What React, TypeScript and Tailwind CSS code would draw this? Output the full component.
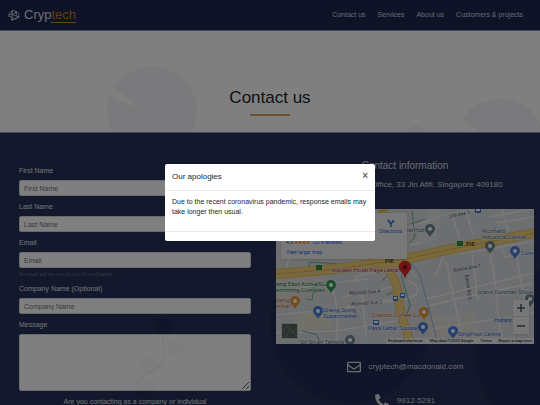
import React, { useState } from 'react';
import { FaRegEnvelope, FaPhoneAlt, FaMapMarkerAlt } from 'react-icons/fa';

const navLinks = ['Contact us', 'Services', 'About us', 'Customers & projects'];

const minorRoads = [
  'M0 84 L40 76 L92 70', 'M10 60 L14 46', 'M0 106 L60 100 L118 92', 'M56 76 L62 104 L60 135',
  'M80 72 Q78 66 86 66 L110 62', 'M66 88 L118 78', 'M70 98 L118 90', 'M0 124 L60 122 L120 112',
  'M86 84 L90 128', 'M134 18 L168 6 L200 0', 'M176 6 L184 30', 'M190 2 L197 26', 'M134 36 L146 34',
  'M160 66 L168 46 L214 40 L258 32', 'M170 52 L178 90 L186 126', 'M214 42 L222 92', 'M196 44 L202 92',
  'M148 98 L206 84 L258 74', 'M150 90 L258 64', 'M156 120 L258 104', 'M220 92 L226 130',
  'M208 30 L258 24', 'M220 14 L258 8', 'M212 8 L258 0', 'M226 0 L232 22', 'M240 44 L250 100',
  'M224 32 L229 48 L258 42', 'M140 68 L132 60', 'M132 72 Q146 76 140 86 L130 90',
];

const places = [
  { x: 154, y: 21, color: '#6f8791', name: ['larHub'], tx: 131, ty: 23 },
  { x: 214, y: 38, color: '#6f8791', name: ['Richfield', 'Industrial Centre'], tx: 206, ty: 24 },
  { x: 239, y: 43, color: '#4a80dd', name: ['Com'], tx: 245, ty: 46 },
  { x: 55, y: 77, color: '#2f9a4c', name: ['lang East ActiveSG', 'wimming Complex'], tx: -1, ty: 77 },
  { x: 19, y: 93, color: '#e79a32', name: ['ylang', 'entral'], tx: -1, ty: 93 },
  { x: 42, y: 103, color: '#4a80dd', name: ['Sheng Siong', 'Supermarket'], tx: 47, ty: 103 },
  { x: 148, y: 104, color: '#e79a32', name: ['Coexist Coffee Co'], tx: 96, ty: 108 },
  { x: 147, y: 119, color: '#4a80dd', name: ['Paya Lebar Square'], tx: 92, ty: 121 },
  { x: 177, y: 123, color: '#4a80dd', name: ['SingPost Centre'], tx: 182, ty: 127 },
  { x: 74, y: 132, color: '#6f8791', name: ['Sri Sivan Temple'], tx: 24, ty: 135 },
  { x: 254, y: 91, color: '#6f8791', name: ['Grand Dunman Showf'], tx: 201, ty: 85 },
];

const labelColors: Record<string, string> = {
  '#6f8791': '#5e7480',
  '#4a80dd': '#3a70cf',
  '#2f9a4c': '#228044',
  '#e79a32': '#cf6c1c',
};

const MapDrawing = () => (
  <svg viewBox="0 0 258 135" className="block w-full" role="img" aria-label="Map of Paya Lebar">
    <rect width="258" height="135" fill="#d9dce0" />
    <path d="M0 70 L50 66 L54 84 L0 92Z M150 108 L200 104 L206 135 L156 135Z" fill="#e2e0d8" />
    <path d="M18 106 L54 100 L58 118 L20 122Z" fill="#e3e0d3" />
    <path d="M152 0 L166 0 L160 30 L138 36Z" fill="#e3e5e8" />
    <g fill="none" stroke="#f1f2f4" strokeWidth="1.6">
      {minorRoads.map((d) => <path key={d} d={d} />)}
    </g>
    <g fill="none" strokeWidth="1">
      <path d="M135 54 L144 66 L157 116 L162 135" stroke="#92b5e8" />
      <path d="M136 2 L139 28 L133 34 M134 15 L150 10 M30 63 L34 53 L110 58 M30 90 L36 91 L38 78 M26 122 L40 125 L44 132 M106 72 L112 66 M110 86 L118 83 M125 66 L134 96 L130 108" stroke="#6bb596" />
    </g>
    <g fill="none" stroke="#e6c05f">
      <path d="M0 65 L60 60 L124 51 L176 40 L258 24" strokeWidth="10" />
      <path d="M100 62 L136 50 L168 43" strokeWidth="6" />
      <path d="M106 0 L112 14" strokeWidth="9" />
      <path d="M112 60 Q122 74 122 86 Q122 100 135 135" strokeWidth="9" />
    </g>
    <g fill="none" stroke="#f3d27a">
      <path d="M0 65 L60 60 L124 51 L176 40 L258 24" strokeWidth="8" />
      <path d="M100 62 L136 50 L168 43" strokeWidth="4" />
      <path d="M112 60 Q122 74 122 86 Q122 100 135 135" strokeWidth="7" />
    </g>
    <path d="M0 65 L60 60 L124 51 L176 40 L258 24" fill="none" stroke="#d9b455" strokeWidth="1" />
    <rect x="40" y="56" width="6" height="5" fill="#2d8c3c" />
    <rect x="181" y="32" width="6" height="5" fill="#2d8c3c" />
    <g fill="#3f78d6">
      <rect x="199" y="-1" width="6" height="5" rx="1" />
      <rect x="117" y="87" width="5" height="5" rx="1" />
      <rect x="124" y="84" width="5" height="5" rx="1" />
      <rect x="97" y="111" width="6" height="5" rx="1" />
    </g>
    <g fill="#ffffff">
      <rect x="200" y="0" width="4" height="2" />
      <rect x="118" y="88" width="3" height="2" />
      <rect x="125" y="85" width="3" height="2" />
      <rect x="98" y="112" width="4" height="2" />
    </g>
    {places.map((p) => (
      <g key={p.name[0]}>
        <path
          d={`M${p.x} ${p.y + 7} C${p.x - 1} ${p.y + 4} ${p.x - 5} ${p.y + 2} ${p.x - 5} ${p.y - 1} A5 5 0 0 1 ${p.x + 5} ${p.y - 1} C${p.x + 5} ${p.y + 2} ${p.x + 1} ${p.y + 4} ${p.x} ${p.y + 7}Z`}
          fill={p.color}
        />
        <circle cx={p.x} cy={p.y - 1} r="2" fill="#ffffff" />
        <text
          fontSize="6"
          fontFamily="Roboto, sans-serif"
          fill={labelColors[p.color]}
          stroke="#eceef0"
          strokeWidth="1"
          paintOrder="stroke"
        >
          {p.name.map((line, i) => <tspan key={line} x={p.tx} y={p.ty + i * 6}>{line}</tspan>)}
        </text>
      </g>
    ))}
    <g fontSize="5" fontFamily="Roboto, sans-serif" fill="#5b6068">
      <text x="174" y="9" transform="rotate(-12 174 9)">Ubi Ave 1</text>
      <text x="178" y="63" transform="rotate(-10 178 63)">Eunos Ave 7</text>
      <text x="73" y="86" transform="rotate(-4 73 86)">Aljunied Ave 4</text>
      <text x="75" y="97" transform="rotate(-4 75 97)">Aljunied Ave 3</text>
      <text x="189" y="66" transform="rotate(82 189 66)">Eunos Rd 5</text>
      <text x="109" y="54" fontSize="6" fontWeight="500" fill="#4d3a22">PIE</text>
      <text x="190" y="37" fontSize="6" fontWeight="500" fill="#4d3a22">PIE</text>
      <text x="218" y="113" fontSize="6" fill="#3a70cf">Hafary</text>
    </g>
    <text x="56" y="63" fontSize="6" fontFamily="Roboto, sans-serif" fill="#c22f37" stroke="#eceef0" strokeWidth="1" paintOrder="stroke">
      Aqueen Hotel Paya Lebar
    </text>
    <path d="M129 69 C128 64 123 62 123 58 A6 6 0 0 1 135 58 C135 62 130 64 129 69Z" fill="#e02a27" stroke="#a81c1c" strokeWidth="0.5" />
    <circle cx="129" cy="58" r="2" fill="#7b0f0f" />
    <rect x="5" y="114" width="17" height="16" rx="1" fill="#c4c8ca" />
    <rect x="6" y="115" width="15" height="14" fill="#56645c" />
    <path d="M6 122 L12 117 L16 124 L21 119 M9 129 L14 121 L21 127" stroke="#78857b" strokeWidth="1" fill="none" />
  </svg>
);

const GoogleMap = () => (
  <div className="relative w-full overflow-hidden font-['Roboto',sans-serif]">
    <MapDrawing />
    <div className="absolute left-[5px] top-1 flex h-[46px] w-[126px] justify-between bg-[#f0f1f3] px-[5px] shadow">
      <div className="flex flex-col justify-end pb-[2px] text-[5px] leading-[10px]">
        <p className="text-gray-700">4.0 <span className="text-orange-400">★★★★</span> <a href="#reviews" className="text-blue-600">1,014 reviews</a></p>
        <a href="#map" className="text-[#2a6cd4]">View larger map</a>
      </div>
      <a href="#directions" className="flex flex-col items-center pt-[6px] text-[5px] leading-[8px] text-[#2a6cd4]">
        <svg viewBox="0 0 10 10" className="h-2 w-2" fill="none" stroke="currentColor" strokeWidth="1.8">
          <path d="M5 10 V6 L2 3 M5 6 Q5 4 8 3" />
          <path d="M0.5 1 H4 L1 4.5Z M6.5 0.8 L10 3 L6.8 5.2Z" fill="currentColor" stroke="none" />
        </svg>
        Directions
      </a>
    </div>
    <div className="absolute bottom-[10px] right-[5px] flex w-4 flex-col divide-y divide-gray-300 bg-[#f0f1f3] text-gray-600 shadow">
      <button type="button" aria-label="Zoom in" className="flex h-[17px] items-center justify-center">
        <svg viewBox="0 0 8 8" className="h-2 w-2" stroke="currentColor" strokeWidth="1.5"><path d="M0 4H8M4 0V8" /></svg>
      </button>
      <button type="button" aria-label="Zoom out" className="flex h-[17px] items-center justify-center">
        <svg viewBox="0 0 8 8" className="h-2 w-2" stroke="currentColor" strokeWidth="1.5"><path d="M0 4H8" /></svg>
      </button>
    </div>
    <div className="absolute bottom-0 right-0 flex gap-[7px] bg-gray-100/80 px-[2px] text-[4px] leading-[6px] text-black">
      <span>Keyboard shortcuts</span>
      <span>Map data ©2023 Google</span>
      <span>Terms</span>
      <span>Report a map error</span>
    </div>
  </div>
);

const Logo = () => (
  <a href="#home" className="flex items-center gap-1 text-[#d9dbe4]">
    <svg viewBox="0 0 12 12" className="h-3 w-3" fill="none" stroke="currentColor" strokeWidth="0.7">
      <path d="M4 2.5 L6 1 L8 3 L11 4.5 L10.5 8 L8 10 L4 11 L3.5 8 L1 7 M4 2.5 L4.5 6 L8 3 M4.5 6 L3.5 8 L8 10 L8.5 6.5 L4.5 6 M8.5 6.5 L10.5 8 M0 5.5 H4 M1 4 H4 M8 3 L8.5 6.5" />
      <g fill="currentColor" stroke="none">
        <circle cx="4" cy="2.5" r="0.9" />
        <circle cx="8" cy="3" r="0.9" />
        <circle cx="4" cy="10.5" r="1" />
        <circle cx="10.5" cy="8" r="0.9" />
        <circle cx="1" cy="7" r="0.8" />
      </g>
    </svg>
    <span className="text-[13px] leading-[15px]">
      Cryp<span className="inline-block border-b border-[#d9841f] text-[#c87a22]">tech</span>
    </span>
  </a>
);

const inputClass =
  'block h-4 w-full rounded-xs border border-[#ced4da] bg-white px-1 text-[7px] text-gray-700 placeholder:text-[#6c757d]';
const labelClass = 'mb-1 block text-[7px] leading-[10px]';

const ContactForm = () => {
  const [contato, setContato] = useState({
    firstName: '',
    lastName: '',
    email: '',
    company: '',
    message: '',
  });

  const handleChange = (e: React.ChangeEvent<HTMLInputElement | HTMLTextAreaElement>) => {
    const { name, value } = e.target;
    setContato({ ...contato, [name]: value });
  };

  return (
    <form className="flex min-w-0 flex-col gap-[6px] px-[19px] pt-[33px] text-[#e4e5ea]">
      <div>
        <label htmlFor="firstName" className={labelClass}>First Name</label>
        <input id="firstName" name="firstName" value={contato.firstName} onChange={handleChange} placeholder="First Name" className={inputClass} />
      </div>
      <div>
        <label htmlFor="lastName" className={labelClass}>Last Name</label>
        <input id="lastName" name="lastName" value={contato.lastName} onChange={handleChange} placeholder="Last Name" className={inputClass} />
      </div>
      <div>
        <label htmlFor="email" className={labelClass}>Email</label>
        <input type="email" id="email" name="email" value={contato.email} onChange={handleChange} placeholder="Email" className={inputClass} />
        <p className="mt-[2px] text-[5px] leading-[8px] text-[#6c757d]">An email will be sent to you for verification</p>
      </div>
      <div>
        <label htmlFor="company" className={labelClass}>Company Name (Optional)</label>
        <input id="company" name="company" value={contato.company} onChange={handleChange} placeholder="Company Name" className={inputClass} />
      </div>
      <div>
        <label htmlFor="message" className={labelClass}>Message</label>
        <textarea id="message" name="message" value={contato.message} onChange={handleChange} className="block h-[57px] w-full rounded-xs border border-[#ced4da] bg-white px-1 text-[7px] text-gray-700" />
      </div>
      <p className="text-center text-[7px] leading-[10px]">Are you contacting as a company or individual</p>
    </form>
  );
};

const ContactInfo = () => (
  <div className="flex min-w-0 flex-col items-center px-[6px] pt-[26px] text-[#d5d7de]">
    <h2 className="text-[10px] leading-[13px]">Contact information</h2>
    <p className="mt-[6px] flex items-center gap-2 text-[8px] leading-[12px]">
      <FaMapMarkerAlt className="h-[14px] w-[14px]" />
      Our central Office, 33 Jln Afifi, Singapore 409180
    </p>
    <div className="mt-[17px] w-full">
      <GoogleMap />
    </div>
    <p className="mt-4 flex items-center gap-2 text-[8px] leading-[14px]">
      <FaRegEnvelope className="h-[14px] w-[14px]" />
      cryptech@macdonald.com
    </p>
    <p className="mt-5 flex items-center gap-2 text-[8px] leading-[14px]">
      <FaPhoneAlt className="h-[14px] w-[14px]" />
      9912-5291
    </p>
  </div>
);

const App = () => {
  const [open, setOpen] = useState(true);

  return (
    <div className="relative h-screen overflow-hidden bg-[#26305a] font-['Liberation_Sans',Arial,sans-serif]">
      <header className="flex h-[31px] items-center justify-between border-b border-[#8a8fa8] bg-[#1e2650] pl-2 pr-[17px]">
        <Logo />
        <nav className="flex gap-3 text-[7px] text-[#d0d2dc]">
          {navLinks.map((link) => <a key={link} href="#">{link}</a>)}
        </nav>
      </header>

      <section className="relative flex h-[102px] flex-col items-center overflow-hidden border-b border-[#8a8fa8] bg-white pt-[57px]">
        <svg viewBox="0 0 540 102" className="absolute inset-0 h-full w-full" fill="#f5f5f8" preserveAspectRatio="xMidYMid slice">
          <circle cx="152" cy="81" r="45" />
          <path d="M144 81 L104 63 L111 54Z" fill="#ffffff" />
          <circle cx="500" cy="113" r="45" />
          <path d="M500 113 L454 98 L460 90Z" fill="#ffffff" />
          <circle cx="416" cy="103" r="8" />
        </svg>
        <h1 className="relative text-[17px] leading-[20px] text-[#212529]">Contact us</h1>
        <span className="relative mt-[6px] h-[2px] w-10 bg-[#e0a050]" />
      </section>

      <main className="relative">
        <svg viewBox="0 0 540 272" className="absolute inset-x-0 top-0 w-full" fill="#222b52">
          <circle cx="350" cy="190" r="80" />
          <circle cx="560" cy="220" r="85" />
          <circle cx="163" cy="193" r="9" />
          <circle cx="145" cy="257" r="10" />
        </svg>
        <div className="relative grid grid-cols-2">
          <ContactForm />
          <ContactInfo />
        </div>
        {/* molecule shapes showing faintly through the message box */}
        <svg viewBox="0 0 540 272" className="pointer-events-none absolute inset-x-0 top-0 w-full" fill="#26305a" fillOpacity="0.02">
          <circle cx="175" cy="214" r="9" />
          <circle cx="150" cy="231" r="10" />
          <circle cx="145" cy="256" r="10" />
          <path d="M163 202 L164 222 Q164 230 157 235 L140 245 Q136 248 136 254" fill="none" stroke="#26305a" strokeOpacity="0.05" strokeWidth="2" />
        </svg>
      </main>

      {open && (
        <div className="absolute inset-0 flex items-start justify-center bg-black/50 pt-[164px]">
          <div role="dialog" aria-labelledby="modalTitle" className="w-[210px] rounded-xs bg-white text-[#212529]">
            <div className="flex items-start justify-between border-b border-[#e9ecef] px-[7px] py-[7px]">
              <h5 id="modalTitle" className="text-[8px] leading-[12px]">Our apologies</h5>
              <button type="button" aria-label="Close" onClick={() => setOpen(false)} className="text-[10px] font-bold leading-[9px] text-[#6b6b6b]">×</button>
            </div>
            <p className="px-[7px] pb-[14px] pt-[6px] text-[7px] leading-[10px]">
              Due to the recent coronavirus pandemic, response emails may take longer then usual.
            </p>
            <div className="h-[10px] border-t border-[#e9ecef]" />
          </div>
        </div>
      )}
    </div>
  );
};

export default App;
